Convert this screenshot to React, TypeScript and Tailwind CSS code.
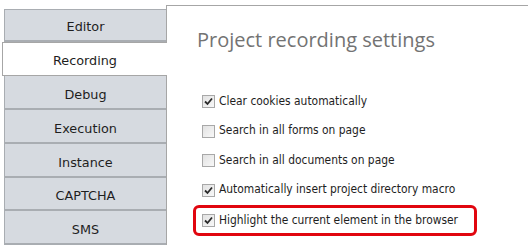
const tabs = ["Editor", "Recording", "Debug", "Execution", "Instance", "CAPTCHA", "SMS"];

const options = [
  { label: "Clear cookies automatically", checked: true },
  { label: "Search in all forms on page", checked: false },
  { label: "Search in all documents on page", checked: false },
  { label: "Automatically insert project directory macro", checked: true },
  { label: "Highlight the current element in the browser", checked: true, highlight: true },
];

function Check({ checked }: { checked: boolean }) {
  return (
    <span className="w-[13px] h-[13px] shrink-0 border border-[#a8a8a8] bg-gradient-to-br from-[#e2e2e2] to-[#f8f8f8] flex items-center justify-center">
      {checked && (
        <svg width="9" height="9" viewBox="0 0 9 9">
          <path d="M1 4.5 L3.5 7 L8 1.5" fill="none" stroke="#2a2a2a" strokeWidth="1.8" />
        </svg>
      )}
    </span>
  );
}

export default function App() {
  return (
    <div className="w-[528px] h-[245px] bg-white overflow-hidden flex font-['DejaVu_Sans',sans-serif] text-[#1e1e1e]">
      {/* Tabs */}
      <div className="w-[166px] shrink-0 pt-[9px] flex flex-col">
        {tabs.map((t, i) =>
          t === "Recording" ? (
            <div
              key={t}
              className="relative z-10 h-[35px] -mr-px ml-[2px] bg-white border border-r-0 border-[#a6a6a6] flex items-center justify-center text-[12.8px] pt-[3px]"
            >
              {t}
            </div>
          ) : (
            <div
              key={t}
              className={`${i === 0 ? "h-[33px] border-t pt-[3px]" : "h-[34px] pt-[5px]"} ml-[4px] bg-[#d6dae0] border-l border-b-2 border-[#a9adb2] flex items-center justify-center text-[12.8px]`}
            >
              {t}
            </div>
          )
        )}
      </div>

      {/* Panel */}
      <div className="flex-1 mt-[5px] border-t border-l border-[#a6a6a6] pl-[30px]">
        <h1 className="mt-[21px] text-[20px] leading-[26px] text-[#737373] font-['Open_Sans',sans-serif] whitespace-nowrap">
          Project recording settings
        </h1>
        <div className="mt-[34px] flex flex-col font-['DejaVu_Sans_Condensed','DejaVu_Sans',sans-serif] text-[11.9px]">
          {options.map((o) =>
            o.highlight ? (
              <div
                key={o.label}
                className="-ml-[4px] mt-[0px] w-[284px] h-[31px] border-[3px] border-[#e1060f] rounded-[6px] flex items-center gap-[4px] pl-[6px] whitespace-nowrap"
              >
                <Check checked={o.checked} />
                <span>{o.label}</span>
              </div>
            ) : (
              <div key={o.label} className="h-[29.5px] flex items-center gap-[4px] pl-[5px] whitespace-nowrap">
                <Check checked={o.checked} />
                <span>{o.label}</span>
              </div>
            )
          )}
        </div>
      </div>
    </div>
  );
}
